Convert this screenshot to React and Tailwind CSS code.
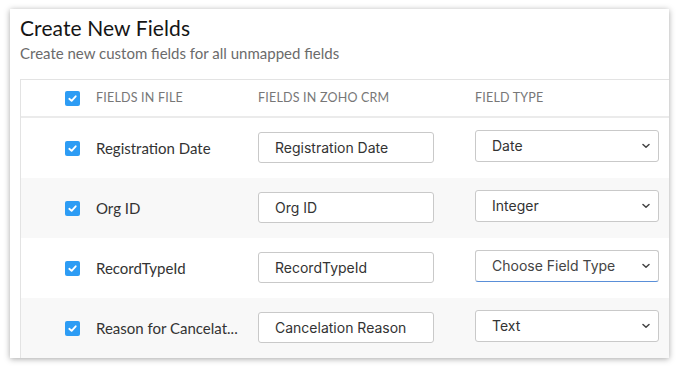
import React from "react";

const rows = [
  { name: "Registration Date", crm: "Registration Date", type: "Date", alt: false },
  { name: "Org ID", crm: "Org ID", type: "Integer", alt: true },
  { name: "RecordTypeId", crm: "RecordTypeId", type: "Choose Field Type", alt: false, focus: true },
  { name: "Reason for Cancelat...", crm: "Cancelation Reason", type: "Text", alt: true },
];

function Check() {
  return (
    <div className="w-[15px] h-[15px] rounded-[2px] bg-[#2d9cf4] flex items-center justify-center">
      <svg width="11" height="11" viewBox="0 0 12 12" fill="none">
        <path d="M2.5 6.3 L5 8.6 L9.5 3.6" stroke="white" strokeWidth="2" strokeLinecap="round" strokeLinejoin="round" />
      </svg>
    </div>
  );
}

function Chevron() {
  return (
    <svg width="8" height="6" viewBox="0 0 8 6" fill="none">
      <path d="M1 1.5 L4 4.3 L7 1.5" stroke="#444" strokeWidth="1.5" strokeLinecap="round" strokeLinejoin="round" />
    </svg>
  );
}

export default function App() {
  return (
    <div className="w-[680px] h-[369px] bg-white overflow-hidden pt-[9px] pl-[10px] font-['Lato',sans-serif]">
      <div className="w-[659px] h-[349px] bg-white shadow-[0_1px_6px_rgba(0,0,0,0.35)] overflow-hidden pl-[10px]">
        <div className="pt-[5px] text-[21px] leading-[28px] text-[#151515] tracking-[0.1px]">Create New Fields</div>
        <div className="mt-[2px] text-[15px] leading-[18px] text-[#6b6b6b]">Create new custom fields for all unmapped fields</div>
        <div className="mt-[17px] border-l border-t border-[#e3e3e3]">
          <div className="h-[38px] flex items-center border-b-2 border-[#ebebeb] text-[12.5px] text-[#777] tracking-[0.2px]">
            <div className="w-[44px]" />
            <Check />
            <div className="ml-[16px] w-[162px]">FIELDS IN FILE</div>
            <div className="w-[217px]">FIELDS IN ZOHO CRM</div>
            <div>FIELD TYPE</div>
          </div>
          {rows.map((r, i) => (
            <div key={i} className={`h-[60px] flex items-center ${r.alt ? "bg-[#f8f8f8]" : "bg-white"}`}>
              <div className="w-[44px]" />
              <Check />
              <div className="ml-[16px] w-[162px] text-[15px] text-[#333]">{r.name}</div>
              <div className="w-[176px] h-[31px] mt-[-1px] border border-[#c9c9c9] rounded-[3px] bg-white flex items-center pl-[16px] text-[14px] text-[#333] font-['Inter',sans-serif]">
                {r.crm}
              </div>
              <div className="w-[41px]" />
              <div className={`w-[184px] h-[32px] mt-[-5px] border rounded-[3px] bg-white flex items-center justify-between pl-[16px] pr-[8px] text-[14px] text-[#333] font-['Inter',sans-serif] ${r.focus ? "border-[#c9c9c9] border-b-[#5a8fd8]" : "border-[#c9c9c9]"}`}>
                <span className={r.focus ? "text-[#444]" : ""}>{r.type}</span>
                <Chevron />
              </div>
            </div>
          ))}
        </div>
      </div>
    </div>
  );
}
